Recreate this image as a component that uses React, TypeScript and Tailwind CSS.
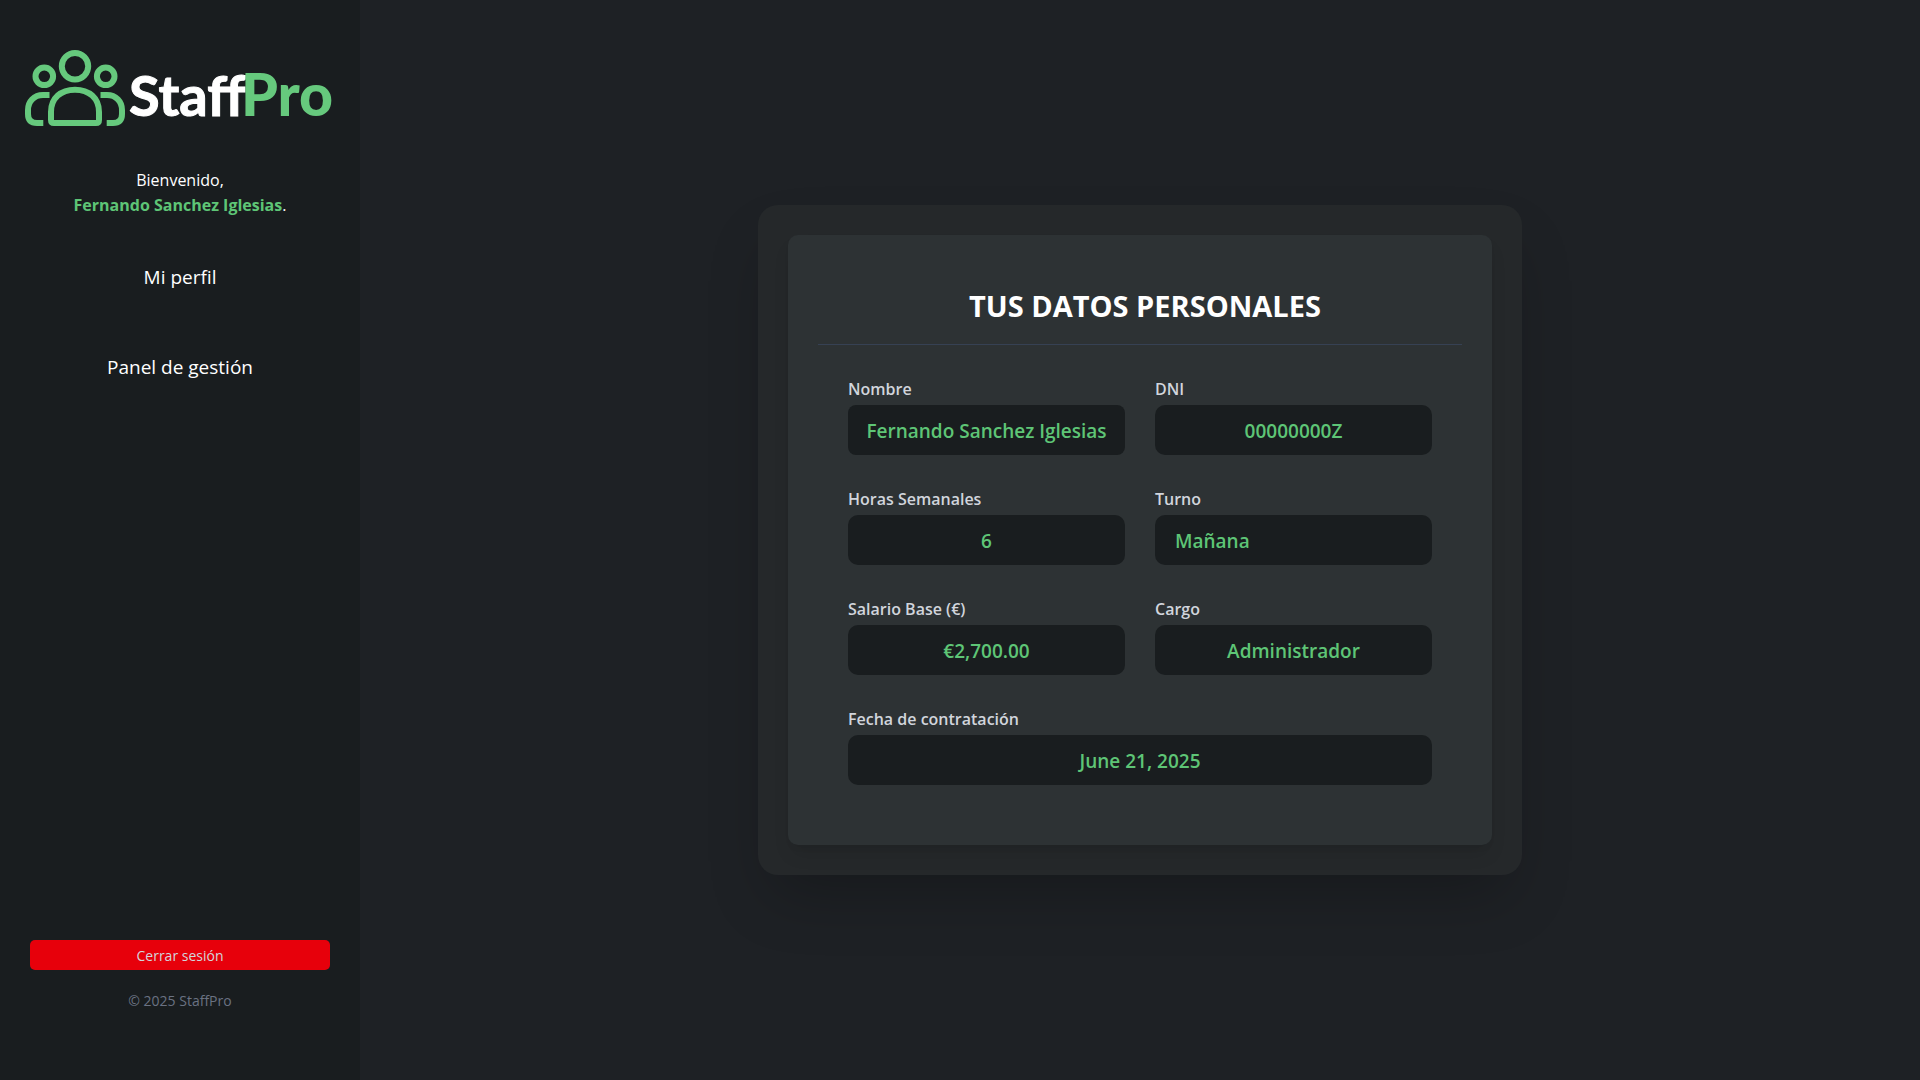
import type { ReactNode } from "react";

function Logo() {
  return (
    <svg viewBox="0 0 310 76" className="block w-full overflow-visible" role="img" aria-label="StaffPro">
      <g fill="none" stroke="#66c97d" strokeWidth="6">
        <circle cx="50" cy="16.3" r="13.2" />
        <circle cx="19.3" cy="26.3" r="8.8" />
        <circle cx="80.7" cy="26.3" r="8.8" />
        <path d="M26 62C26 48 36 39.7 50 39.7S74 48 74 62V70Q74 73 71 73H29Q26 73 26 70Z" />
        <path d="M24.500 45H18C9 45 3 51.500 3 60V64Q3 73 12 73H18.300" />
        <path d="M75.500 45H82C91 45 97 51.500 97 60V64Q97 73 88 73H81.700" />
      </g>
      <g className="font-['Lato',sans-serif]">
        <text x="104" y="66" fontSize="56" fill="#ffffff" stroke="#ffffff" className="font-bold">
          Staff
        </text>
        <text x="216" y="66" fontSize="59" fill="#66c97d" className="font-black">
          Pro
        </text>
      </g>
    </svg>
  );
}

const control =
  "block h-[50px] w-full bg-[#191d1f] px-4 pt-[2px] text-[19px] font-semibold text-[#5ec576] outline-none";

function Field({ id, label, wide, children }: { id: string; label: string; wide?: boolean; children: ReactNode }) {
  return (
    <div className={wide ? "col-span-2" : "min-w-0"}>
      <label htmlFor={id} className="mb-[2px] block text-base leading-7 font-semibold text-gray-300">
        {label}
      </label>
      {children}
    </div>
  );
}

function ReadOnlyInput({ id, value, rounded = "rounded-[10px]" }: { id: string; value: string; rounded?: string }) {
  return <input id={id} type="text" readOnly value={value} className={`${control} ${rounded} text-center`} />;
}

export default function App() {
  return (
    <div className="flex min-h-screen bg-[#1e2125] font-['Open_Sans',sans-serif] text-white">
      <aside className="flex w-[360px] shrink-0 flex-col bg-[#191d1f] px-[30px] pt-[50px] pb-[67px] text-center">
        <div className="-mx-[5px]">
          <Logo />
        </div>
        <p className="mt-[42px] text-base leading-[25px]">
          Bienvenido,
          <br />
          <span className="font-bold text-[#5ec576]">Fernando Sanchez Iglesias</span>.
        </p>
        <nav className="mt-11 flex flex-col gap-[60px] text-[19px] leading-[30px]">
          <a href="#perfil">Mi perfil</a>
          <a href="#gestion">Panel de gestión</a>
        </nav>
        <div className="mt-auto text-sm">
          <button type="button" className="block h-[30px] w-full rounded-[5px] bg-[#e7000b] pt-px text-gray-300">
            Cerrar sesión
          </button>
          <p className="mt-[18px] leading-[25px] text-gray-500">© 2025 StaffPro</p>
        </div>
      </aside>

      <main className="flex flex-1 items-center justify-center">
        <div className="w-full max-w-[764px] rounded-[20px] bg-[#25282a] p-[30px] shadow-[0_31px_62px_-15px_rgba(0,0,0,0.25)]">
          <section className="rounded-[10px] bg-[#2d3234] p-[30px] shadow-[0_12px_19px_-4px_rgba(0,0,0,0.1),0_5px_8px_-5px_rgba(0,0,0,0.1)]">
            <h1 className="border-b border-gray-700 pt-[21px] pb-[18px] pl-[10px] text-center text-[29px] leading-10 font-bold">
              TUS DATOS PERSONALES
            </h1>
            <form className="grid grid-cols-2 gap-[30px] p-[30px]">
              <Field id="nombre" label="Nombre">
                <ReadOnlyInput id="nombre" value="Fernando Sanchez Iglesias" rounded="rounded-lg" />
              </Field>
              <Field id="dni" label="DNI">
                <ReadOnlyInput id="dni" value="00000000Z" />
              </Field>
              <Field id="horas" label="Horas Semanales">
                <ReadOnlyInput id="horas" value="6" />
              </Field>
              <Field id="turno" label="Turno">
                <select id="turno" className={`${control} appearance-none rounded-[10px] pl-5`}>
                  <option>Mañana</option>
                </select>
              </Field>
              <Field id="salario" label="Salario Base (€)">
                <ReadOnlyInput id="salario" value="€2,700.00" />
              </Field>
              <Field id="cargo" label="Cargo">
                <ReadOnlyInput id="cargo" value="Administrador" />
              </Field>
              <Field id="fecha" label="Fecha de contratación" wide>
                <ReadOnlyInput id="fecha" value="June 21, 2025" />
              </Field>
            </form>
          </section>
        </div>
      </main>
    </div>
  );
}
